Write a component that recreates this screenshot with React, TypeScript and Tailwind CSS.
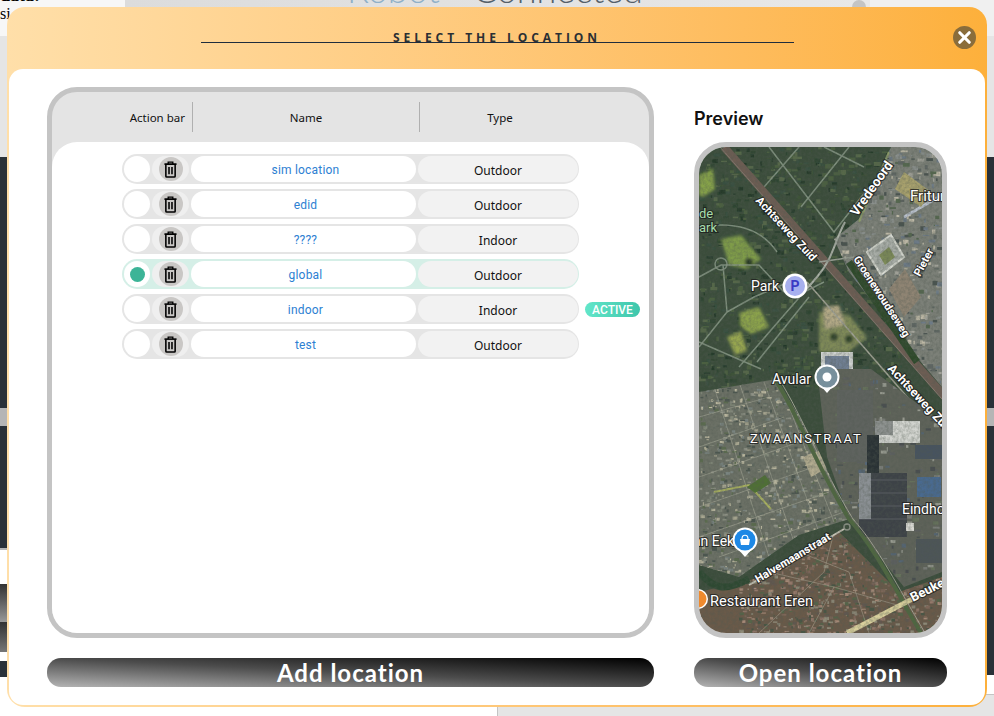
import React from "react";
import { X } from "lucide-react";

const locations = [
  { name: "sim location", type: "Outdoor" },
  { name: "edid", type: "Outdoor" },
  { name: "????", type: "Indoor" },
  { name: "global", type: "Outdoor", selected: true },
  { name: "indoor", type: "Indoor", active: true },
  { name: "test", type: "Outdoor" },
];

const TrashIcon = () => (
  <svg width="13" height="17" viewBox="0 0 14 18" fill="none" stroke="#000" strokeWidth="1.7">
    <path d="M0.5 3.2H13.5" />
    <path d="M4.5 3V1H9.5V3" strokeWidth="1.4" />
    <path d="M2 3.5V16.2C2 16.8 2.4 17.1 2.9 17.1H11.1C11.6 17.1 12 16.8 12 16.2V3.5" />
    <path d="M5.4 6.2V14.2M8.6 6.2V14.2" />
  </svg>
);

const LocationRow = ({ name, type, selected, active }: { name: string; type: string; selected?: boolean; active?: boolean }) => (
  <div className="flex items-center">
    <div className={`flex h-[30px] w-[457px] items-center rounded-full pl-[2px] pr-[2px] ${selected ? "bg-[#d5efe7]" : "bg-[#e5e5e5]"}`}>
      <div className="flex h-[26px] w-[26px] shrink-0 items-center justify-center rounded-full bg-white">
        {selected && <div className="h-[15px] w-[15px] rounded-full bg-[#3cb497]" />}
      </div>
      <div className="ml-[2px] flex h-[26px] w-[37px] shrink-0 items-center justify-center rounded-full bg-[#efefef]">
        <div className="flex h-[24px] w-[24px] items-center justify-center rounded-full bg-[#c9c7c5]">
          <TrashIcon />
        </div>
      </div>
      <div className="ml-[2px] flex h-[26px] w-[225px] shrink-0 items-center justify-center rounded-full bg-white pl-[4px] pt-[1px] font-['Roboto',sans-serif] text-[12px] tracking-[0.2px] text-[#2d80d2]">
        {name}
      </div>
      <div className="ml-[2px] flex h-[26px] w-[160px] shrink-0 items-center justify-center rounded-full bg-[#f2f2f2] pt-[3px] font-['Noto_Sans',sans-serif] text-[12px] text-[#111]">
        {type}
      </div>
    </div>
    {active && (
      <span className="ml-[6px] mt-[1px] flex h-[15px] w-[55px] items-center justify-center rounded-full bg-gradient-to-r from-[#62e6c9] to-[#3ec6ab] font-['Roboto',sans-serif] text-[12px] font-medium leading-none text-white">
        ACTIVE
      </span>
    )}
  </div>
);

// little seeded generator for the aerial photo texture
const makeSpecks = (seed: number, count: number, x: number, y: number, w: number, h: number, colors: string[], size = 5) => {
  let s = seed;
  const rnd = () => {
    s = (s * 16807) % 2147483647;
    return s / 2147483647;
  };
  const out = [];
  for (let i = 0; i < count; i++) {
    out.push({
      x: x + rnd() * w,
      y: y + rnd() * h,
      w: 1 + rnd() * size,
      h: 1 + rnd() * (size * 0.6),
      fill: colors[Math.floor(rnd() * colors.length)],
    });
  }
  return out;
};

const urban = makeSpecks(11, 520, 130, 0, 113, 250, ["#8a8f8c", "#5f6663", "#a3a39a", "#4a5250", "#6d7a86", "#bdb8a6", "#55684f"], 6);
const forestA = makeSpecks(23, 1100, 0, 0, 200, 240, ["#2f4530", "#3d5238", "#4b6040", "#263b2c", "#56684a", "#37503f"], 6);
const housesA = makeSpecks(37, 1700, 0, 205, 170, 240, ["#8f9286", "#646c64", "#aaa892", "#4c5650", "#7a8480", "#bcb8a0", "#5c6c50", "#83897a"], 4);
const housesB = makeSpecks(41, 1100, 40, 380, 203, 106, ["#7d6658", "#645850", "#94786a", "#4a5644", "#8f8a78", "#a48876", "#566548"], 4);
const industrial = makeSpecks(53, 300, 130, 230, 113, 210, ["#5d6160", "#7a7d78", "#484e50", "#96998f", "#566674", "#66725c"], 6);

const Label = ({ x, y, size = 11, rotate, bold, color = "#fff", spacing, children }: { x: number; y: number; size?: number; rotate?: number; bold?: boolean; color?: string; spacing?: number; children: React.ReactNode }) => (
  <text
    x={x}
    y={y}
    fontSize={size}
    fontFamily="Roboto, sans-serif"
    fontWeight={bold ? 700 : 400}
    fill={color}
    stroke="#1c1c1c"
    strokeWidth="2.2"
    strokeOpacity="0.75"
    paintOrder="stroke"
    letterSpacing={spacing}
    transform={rotate ? `rotate(${rotate} ${x} ${y})` : undefined}
  >
    {children}
  </text>
);

const MapPicture = () => (
  <svg viewBox="0 0 243 486" className="block h-full w-full" preserveAspectRatio="none">
    <defs>
      <clipPath id="resA">
        <path d="M0 245L78 232L118 300L150 372L100 388L40 430L0 418Z" />
      </clipPath>
      <clipPath id="resB">
        <path d="M0 445L55 432L140 385L200 445L243 430V486H0Z" />
      </clipPath>
      <clipPath id="urbanClip">
        <path d="M192 0H243V240L205 195L150 125L135 92L160 72Z" />
      </clipPath>
      <clipPath id="indClip">
        <path d="M118 222L172 222L243 275V425L205 440L150 372L128 310Z" />
      </clipPath>
      <filter id="soft" x="0" y="0" width="100%" height="100%">
        <feGaussianBlur stdDeviation="0.5" />
      </filter>
      <filter id="softer" x="-20%" y="-20%" width="140%" height="140%">
        <feGaussianBlur stdDeviation="1.4" />
      </filter>
      <filter id="grain" x="0" y="0" width="100%" height="100%">
        <feTurbulence type="fractalNoise" baseFrequency="0.32" numOctaves="3" seed="4" />
        <feColorMatrix values="0 0 0 0 0.08  0 0 0 0 0.1  0 0 0 0 0.08  1.9 0 0 0 -0.62" />
      </filter>
    </defs>
    <g filter="url(#soft)">
      <rect width="243" height="486" fill="#3a4e3b" />
      {forestA.map((r, i) => (
        <rect key={i} x={r.x} y={r.y} width={r.w} height={r.h} fill={r.fill} />
      ))}
      {/* grass patches in the park */}
      <g filter="url(#softer)">
        <path d="M22 92L42 88L62 112L48 122L30 118Z" fill="#7f9c48" />
        <path d="M40 166L60 160L70 180L52 187L42 180Z" fill="#8ca34c" />
        <path d="M28 190L42 184L48 204L36 208Z" fill="#97a650" />
        <path d="M0 28L14 22L16 42L4 50L0 48Z" fill="#86a24a" />
        <path d="M120 165L150 168L168 190L150 205L120 205Z" fill="#7f8a58" />
        <path d="M124 160L140 158L146 178L126 182Z" fill="#b3a986" />
        <circle cx="50" cy="115" r="4" fill="#233524" />
        <circle cx="135" cy="190" r="4" fill="#2c4028" />
        <circle cx="150" cy="192" r="4" fill="#2c4028" />
      </g>
      {/* park paths */}
      <g fill="none" stroke="#8b9a88" strokeWidth="1.5" strokeOpacity="0.85">
        <path d="M0 80C30 75 60 78 78 105M22 118L0 130M22 118L60 118L85 145M24 118L28 165L0 200M28 165L55 150L90 135" />
        <circle cx="22" cy="117" r="6" />
        <path d="M70 0L135 85L170 40M100 0L65 40M150 0L102 60M40 220L105 145L125 135M62 222L0 195M125 0L165 20" />
        <path d="M58 215L110 150" />
      </g>
      {/* urban north east */}
      <g clipPath="url(#urbanClip)">
        <rect x="120" width="123" height="260" fill="#7b8078" />
        {urban.map((r, i) => (
          <rect key={i} x={r.x} y={r.y} width={r.w} height={r.h} fill={r.fill} />
        ))}
        <path d="M168 105L192 88L205 110L182 128Z" fill="#a7aca6" stroke="#d6d8d0" strokeWidth="2" />
        <path d="M180 108L190 100L196 110L186 118Z" fill="#7c8a58" />
        <path d="M190 142L206 122L222 150L205 170Z" fill="#8f8473" />
        <path d="M205 70L243 48" stroke="#b9c0cc" strokeWidth="3" />
        <path d="M205 25L232 45L222 60L196 42Z" fill="#a9a26e" />
      </g>
      {/* railway and the main road */}
      <path d="M25 0L246 250" stroke="#6d5d53" strokeWidth="8" />
      <path d="M21 0L243 252" stroke="#83786e" strokeWidth="1" />
      <path d="M108 135L243 290" stroke="#a1a294" strokeWidth="1.5" />
      <path d="M160 75L190 5" stroke="#8d9b6a" strokeWidth="2" />
      <path d="M146 75C135 95 135 110 118 130L105 145" stroke="#aab0a6" strokeWidth="2" fill="none" />
      <path d="M120 115L155 110" stroke="#9aa095" strokeWidth="1.5" />
      <path d="M150 115L218 215" stroke="#2d4a2c" strokeWidth="7" />
      {/* building at the bottom of the sand area */}
      <rect x="122" y="205" width="32" height="22" fill="#cfd2d0" />
      <rect x="126" y="209" width="24" height="14" fill="#6f7f93" />
      {/* houses south west */}
      <g clipPath="url(#resA)">
        <rect y="225" width="160" height="215" fill="#6c7166" />
        {housesA.map((r, i) => (
          <rect key={i} x={r.x} y={r.y} width={r.w} height={r.h} fill={r.fill} />
        ))}
        <g stroke="#a9aa9a" strokeWidth="1" strokeOpacity="0.6">
          <path d="M0 270L70 250M0 300L85 270M0 330L100 295M0 360L115 320M0 390L130 345M20 410L145 365" />
          <path d="M15 240L70 410M40 235L95 395M65 235L120 385M90 260L135 375" />
        </g>
        <path d="M15 345L50 338L72 362" stroke="#a8b060" strokeWidth="2" fill="none" />
        <path d="M48 340L66 328L72 336L56 346Z" fill="#4f7034" />
        <path d="M104 310L120 304L130 320L112 330Z" fill="#b3ac90" />
      </g>
      <g clipPath="url(#indClip)">
        <rect x="118" y="220" width="125" height="225" fill="#5f635a" />
        {industrial.map((r, i) => (
          <rect key={i} x={r.x} y={r.y} width={r.w} height={r.h} fill={r.fill} />
        ))}
        <rect x="138" y="243" width="36" height="72" fill="#5f635e" />
        <rect x="176" y="274" width="45" height="22" fill="#d2d4cf" />
        <rect x="176" y="274" width="18" height="14" fill="#8e9290" />
        <rect x="160" y="326" width="48" height="64" fill="#3e4247" />
        <path d="M160 333H208M160 346H208M160 359H208M160 372H208" stroke="#50545a" strokeWidth="1.5" />
        <rect x="160" y="326" width="12" height="46" fill="#8b9094" />
        <rect x="168" y="288" width="12" height="38" fill="#2c3036" />
        <rect x="218" y="330" width="24" height="20" fill="#4a6a90" />
        <rect x="216" y="298" width="28" height="14" fill="#47535f" />
        <rect x="217" y="392" width="26" height="24" fill="#4e5459" />
        <rect x="207" y="376" width="8" height="8" fill="#d8d8d2" />
      </g>
      <g clipPath="url(#resB)">
        <rect y="380" width="243" height="106" fill="#6a5a4a" />
        {housesB.map((r, i) => (
          <rect key={i} x={r.x} y={r.y} width={r.w} height={r.h} fill={r.fill} />
        ))}
        <g stroke="#a8a08e" strokeWidth="1" strokeOpacity="0.6" fill="none">
          <path d="M70 425L135 440L205 460M100 405L150 425M60 486L125 425L135 385M110 486L135 440M170 486L150 425" />
        </g>
      </g>
      {/* green corridor and roads */}
      <path d="M76 232C100 270 118 320 150 372C175 400 195 440 222 486" stroke="#4f6840" strokeWidth="4" fill="none" />
      <path d="M80 232C104 270 122 320 154 372C179 400 199 440 226 486" stroke="#a4a694" strokeWidth="1" fill="none" />
      <path d="M0 425C15 442 25 445 50 432" stroke="#2f4a32" strokeWidth="7" fill="none" />
      <path d="M50 438L145 382" stroke="#c9c6b8" strokeWidth="2" />
      <path d="M148 486L244 436" stroke="#d8cf9c" strokeWidth="5" />
      <circle cx="148" cy="380" r="3" fill="none" stroke="#8b9085" strokeWidth="1.5" />
    </g>
    <rect width="243" height="486" filter="url(#grain)" opacity="0.4" />

    {/* labels */}
    <Label x={0} y={71} size={13} color="#a6dcab">de</Label>
    <Label x={0} y={85} size={13} color="#a6dcab">ark</Label>
    <Label x={211} y={54} size={15}>Fritur</Label>
    <Label x={158} y={70} size={13.5} rotate={-55} bold>Vredeoord</Label>
    <Label x={56} y={54} size={11.5} rotate={47} bold>Achtseweg Zuid</Label>
    <Label x={154} y={112} size={11} rotate={57} bold>Groenewoudseweg</Label>
    <Label x={221} y={130} size={11} rotate={-62} bold>Pieter</Label>
    <Label x={188} y={222} size={12.5} rotate={47} bold>Achtseweg Zuid</Label>
    <Label x={52} y={144} size={14}>Park</Label>
    <Label x={73} y={237} size={14}>Avular</Label>
    <Label x={51} y={296} size={13} spacing={1.8}>ZWAANSTRAAT</Label>
    <Label x={203} y={367} size={14}>Eindhoven</Label>
    <Label x={-6} y={399} size={14}>an Eek</Label>
    <Label x={59} y={436} size={11.2} rotate={-31} bold>Halvemaanstraat</Label>
    <Label x={11} y={459} size={14.6}>Restaurant Eren</Label>
    <Label x={214} y={455} size={13} rotate={-27} bold>Beukenlaan</Label>

    {/* markers */}
    <circle cx="96" cy="139" r="12.5" fill="#fff" />
    <circle cx="96" cy="139" r="10" fill="#a7b0ee" />
    <text x="96" y="144" textAnchor="middle" fontSize="14" fontWeight="700" fontFamily="Roboto, sans-serif" fill="#3a3ac4">P</text>
    <circle cx="128" cy="230" r="12.5" fill="#fff" />
    <path d="M128 246L121 238H135Z" fill="#fff" />
    <circle cx="128" cy="230" r="10.5" fill="#78909c" />
    <circle cx="128" cy="230" r="4.5" fill="#fff" />
    <circle cx="46" cy="393" r="12.5" fill="#fff" />
    <path d="M46 410L39 402H53Z" fill="#fff" />
    <circle cx="46" cy="393" r="10.5" fill="#1e88e5" />
    <path d="M41 392H51L50 398H42Z" fill="#fff" />
    <path d="M43 392C43 387 49 387 49 392" fill="none" stroke="#fff" strokeWidth="1.2" />
    <circle cx="-1" cy="452" r="10" fill="#fff" />
    <circle cx="-1" cy="452" r="8.5" fill="#ef8a2e" />
  </svg>
);

const PillButton = ({ className, children }: { className: string; children: React.ReactNode }) => (
  <button className={`flex h-[29px] items-center justify-center rounded-[14px] bg-[linear-gradient(to_top_right,#b4b4b4,#4c4c4c_50%,#000000)] font-['Lato',sans-serif] text-[24px] font-bold leading-none tracking-[1px] text-white ${className}`}>
    {children}
  </button>
);

export default function App() {
  return (
    <div className="relative h-[716px] w-[994px] overflow-hidden bg-white">
      {/* page behind the modal */}
      <div className="flex h-[36px] items-start bg-[#f0f0f0]">
        <div className="h-[36px] w-[125px] bg-[#f7f7f7] font-['Liberation_Serif',serif] leading-[14px] text-black">
          <div className="-mt-[12px] text-[18px] font-bold">data:</div>
          <div className="pt-[5px] text-[16px]">si</div>
        </div>
        <div className="flex h-[26px] w-[745px] justify-between rounded-br-[20px] bg-gradient-to-r from-[#dcdcdc] to-[#e8e8e8] pl-[222px] pr-[4px]">
          <div className="-mt-[34px] font-['Lato',sans-serif] text-[36px] font-light leading-[46px] text-[#55606a]">
            <span className="text-[#8fb0c8]">Robot</span> - Connected
          </div>
          <div className="h-[14px] w-[14px] rounded-full bg-[#c4c4c4]" />
        </div>
      </div>
      <div className="h-[121px] bg-[#e5e5e5]" />
      <div className="h-[251px] bg-[#2a3138]" />
      <div className="h-[18px] bg-[#b5b5b5]" />
      <div className="h-[122px] bg-[#2a3138]" />
      <div className="flex h-[168px]">
        <div className="w-[12px] shrink-0">
          <div className="h-[2px] bg-[#b5b5b5]" />
          <div className="h-[34px] bg-white" />
          <div className="h-[38px] bg-gradient-to-b from-[#333] to-[#999]" />
          <div className="h-[30px] bg-gradient-to-b from-[#333] to-[#777]" />
          <div className="h-[9px] bg-white" />
          <div className="h-[16px] bg-[#2a3138]" />
        </div>
        <div className="flex-1">
          <div className="h-[127px] bg-[#2a3138]" />
          <div className="h-[19px] bg-white" />
          <div className="ml-[485px] h-[22px] rounded-tl-[12px] border-t border-l border-[#c4c4c4] bg-[#e5e5e5]" />
        </div>
      </div>

      {/* modal */}
      <div className="absolute left-[7px] top-[7px] flex h-[700px] w-[980px] flex-col rounded-[18px] bg-gradient-to-r from-[#ffdfa9] to-[#fdb03b] px-[2px] pb-[2px]">
        <div className="relative flex h-[62px] shrink-0 justify-center">
          <h2 className="mt-[22px] h-[14px] w-[593px] border-b border-[#1f2d3d] text-center font-['Open_Sans',sans-serif] text-[12px] font-bold leading-[17px] tracking-[3.95px] text-[#2b2f33]">
            SELECT THE LOCATION
          </h2>
          <button className="absolute right-[9px] top-[19px] flex h-[23px] w-[23px] items-center justify-center rounded-full bg-[#8a6d3b]">
            <X className="h-[19px] w-[19px] text-white" strokeWidth={4} />
          </button>
        </div>
        <div className="flex flex-1 gap-[40px] rounded-[14px] bg-white pl-[38px] pt-[18px]">
          <div className="flex w-[607px] flex-col">
            <div className="flex h-[551px] flex-col overflow-hidden rounded-[30px] border-[5px] border-[#c4c4c4] bg-[#e4e4e4]">
              <div className="flex h-[50px] shrink-0 items-center font-['Noto_Sans',sans-serif] text-[11.5px] text-[#111]">
                <div className="flex h-[30px] w-[141px] items-center justify-end border-r border-[#b0b0b0] pr-[7px] pt-[2px]">Action bar</div>
                <div className="flex h-[30px] w-[227px] items-center justify-center border-r border-[#b0b0b0] pt-[2px]">Name</div>
                <div className="flex h-[30px] w-[160px] items-center justify-center pt-[2px]">Type</div>
              </div>
              <div className="flex flex-1 flex-col gap-[5px] rounded-t-[25px] bg-white pl-[70px] pt-[12px]">
                {locations.map((l) => (
                  <LocationRow key={l.name} {...l} />
                ))}
              </div>
            </div>
            <PillButton className="mt-[20px] w-[607px]">Add location</PillButton>
          </div>
          <div className="flex w-[253px] flex-col">
            <div className="flex h-[55px] shrink-0 items-center pt-[8px] font-['Inter',sans-serif] text-[18px] font-semibold text-[#111]">Preview</div>
            <div className="h-[496px] overflow-hidden rounded-[32px] border-[5px] border-[#c4c4c4]">
              <MapPicture />
            </div>
            <PillButton className="mt-[20px] w-[253px]">Open location</PillButton>
          </div>
        </div>
      </div>
    </div>
  );
}
